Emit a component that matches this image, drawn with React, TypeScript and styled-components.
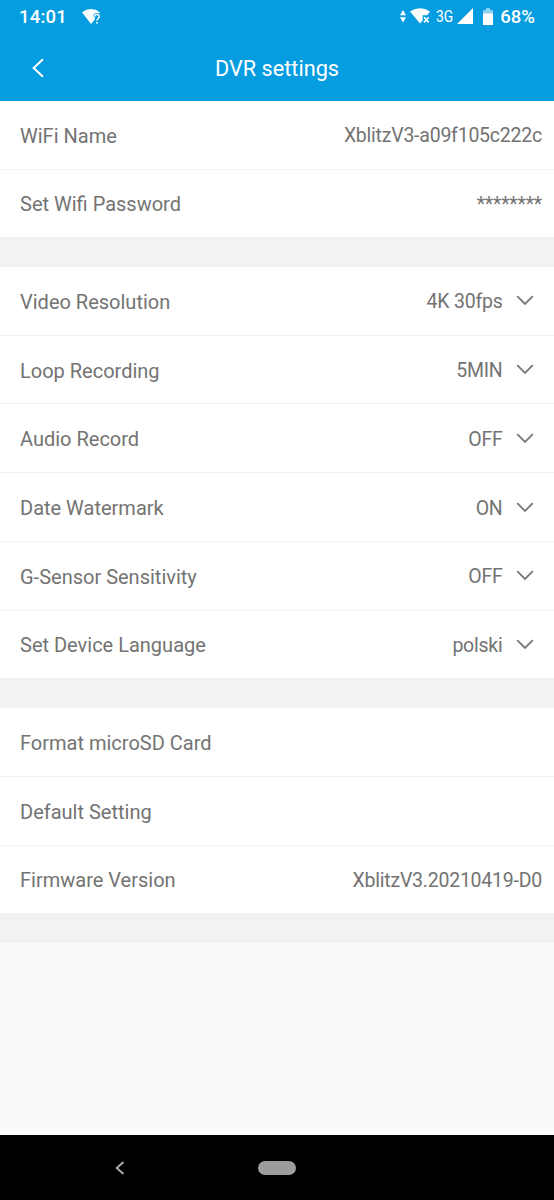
import React from "react";
import styled, { createGlobalStyle } from "styled-components";

const GlobalStyle = createGlobalStyle`
  *, *::before, *::after { box-sizing: border-box; }
  body {
    margin: 0;
    background: #fafafa;
    font-family: Roboto, "Liberation Sans", sans-serif;
  }
`;

const Screen = styled.main`
  display: flex;
  flex-direction: column;
  width: 554px;
  height: 1200px;
  overflow: hidden;
  background: #fafafa;
`;

const Header = styled.header`
  flex: none;
  height: 100.75px;
  background: #069de0;
  color: #fff;
`;

const StatusBar = styled.div`
  display: flex;
  align-items: center;
  height: 34px;
  padding: 0 19px;
`;

const StatusText = styled.span<{ $left?: number; $spacing?: number }>`
  margin-left: ${(p) => p.$left ?? 0}px;
  font-size: 18.5px;
  font-weight: 500;
  letter-spacing: ${(p) => p.$spacing ?? 0}px;
  line-height: 34px;
  white-space: nowrap;
`;

const NetworkType = styled.span`
  width: 17px;
  margin-left: 6px;
  font-size: 16.5px;
  line-height: 32px;
  transform: scaleX(0.84);
  transform-origin: left center;
`;

const StatusIcon = styled.svg<{ $left?: number }>`
  display: block;
  flex: none;
  margin-left: ${(p) => p.$left ?? 0}px;
  overflow: visible;
`;

const StatusRight = styled.div`
  display: flex;
  align-items: center;
  margin-left: auto;
`;

const TitleBar = styled.div`
  display: grid;
  grid-template-columns: 100px 1fr 100px;
  align-items: center;
  height: 66px;
  padding-top: 3px;
`;

const BackButton = styled.button`
  display: block;
  padding: 0 0 0 32px;
  margin-top: -2px;
  border: 0;
  background: none;
  color: inherit;
`;

const Title = styled.h1`
  margin: 0;
  font-size: 21.7px;
  font-weight: 400;
  line-height: 30px;
  text-align: center;
`;

const Group = styled.section`
  flex: none;
  background: #fff;
`;

const Gap = styled.div`
  flex: none;
  height: 30px;
  background: #f2f2f2;
`;

const Row = styled.div`
  display: flex;
  align-items: center;
  justify-content: space-between;
  height: 68.75px;
  padding: 2px 12px 0 20px;
  border-bottom: 1px solid #f2f2f2;
  color: #737373;
  font-size: 20px;

  &:last-child {
    height: 67.4px;
    border-bottom: 0;
  }
`;

const Label = styled.span`
  white-space: nowrap;
`;

const Value = styled.span`
  display: flex;
  align-items: center;
  font-size: 19.5px;
  letter-spacing: -0.23px;
`;

const Chevron = styled.svg`
  display: block;
  margin: -2px 8.5px 0 13px;
`;

const NavBar = styled.nav`
  display: grid;
  grid-template-columns: 1fr 38px 1fr;
  align-items: center;
  height: 65px;
  margin-top: auto;
  background: #000;
`;

const NavBack = styled.svg`
  display: block;
  margin-left: 115px;
`;

const HomePill = styled.div`
  height: 14px;
  border-radius: 7px;
  background: #9d9d9d;
`;

type Item = { label: string; value?: string; select?: boolean };

const network: Item[] = [
  { label: "WiFi Name", value: "XblitzV3-a09f105c222c" },
  { label: "Set Wifi Password", value: "********" },
];

const recording: Item[] = [
  { label: "Video Resolution", value: "4K 30fps", select: true },
  { label: "Loop Recording", value: "5MIN", select: true },
  { label: "Audio Record", value: "OFF", select: true },
  { label: "Date Watermark", value: "ON", select: true },
  { label: "G-Sensor Sensitivity", value: "OFF", select: true },
  { label: "Set Device Language", value: "polski", select: true },
];

const device: Item[] = [
  { label: "Format microSD Card" },
  { label: "Default Setting" },
  { label: "Firmware Version", value: "XblitzV3.20210419-D0" },
];

function SettingsGroup({ items }: { items: Item[] }) {
  return (
    <Group>
      {items.map((item) => (
        <Row key={item.label}>
          <Label>{item.label}</Label>
          {item.value && (
            <Value>
              {item.value}
              {item.select && (
                <Chevron width="18" height="11" viewBox="0 0 18 11">
                  <path d="M1.2 1.2 9 8.9 16.8 1.2" fill="none" stroke="#777" strokeWidth="1.8" />
                </Chevron>
              )}
            </Value>
          )}
        </Row>
      ))}
    </Group>
  );
}

export default function App() {
  return (
    <>
      <GlobalStyle />
      <Screen>
        <Header>
          <StatusBar>
            <StatusText $spacing={0.2}>14:01</StatusText>
            <StatusIcon $left={15} width="19" height="16" viewBox="0 0 19 16">
              <path d="M0 3.2Q9-3.2 18 3.2L17 4.6C14.4 3 11.2 4.6 11.2 7.4H12.8V10.4L9 15Z" fill="#fff" />
              <path d="M12.8 7.6C12.8 4.8 17.3 4.8 17.3 7.5 17.3 9.3 15 9.5 15 11.8M15 13.1V14.8" fill="none" stroke="#fff" strokeWidth="1.4" />
            </StatusIcon>
            <StatusRight>
              <StatusIcon width="6" height="17" viewBox="0 0 6 17">
                <path d="M0 6.2 3 1 6 6.2ZM0 8.2H6L3 13.4Z" fill="#fff" />
              </StatusIcon>
              <StatusIcon $left={4} width="20" height="18" viewBox="0 0 20 18">
                <path d="M0 3.6Q10-3.2 20 3.6L17.2 7.2H12.6V12.4L10 15.5Z" fill="#fff" />
                <path d="m14 9.2 4.6 5.2m0-5.2-4.6 5.2" stroke="#fff" strokeWidth="1.6" />
              </StatusIcon>
              <NetworkType>3G</NetworkType>
              <StatusIcon $left={4} width="16" height="18" viewBox="0 0 16 18">
                <path d="M16 0V16H0Z" fill="#fff" />
              </StatusIcon>
              <StatusIcon $left={10} width="10" height="18" viewBox="0 0 10 18">
                <path d="M3 0H7V2H10V6H0V2H3Z" fill="#8bcff0" />
                <path d="M0 5.5H10V17H0Z" fill="#fff" />
              </StatusIcon>
              <StatusText $left={7}>68%</StatusText>
            </StatusRight>
          </StatusBar>
          <TitleBar>
            <BackButton aria-label="Back">
              <StatusIcon width="12" height="20" viewBox="0 0 12 20">
                <path d="M11 1.2 1.6 10 11 18.8" fill="none" stroke="#fff" strokeWidth="2" />
              </StatusIcon>
            </BackButton>
            <Title>DVR settings</Title>
          </TitleBar>
        </Header>
        <SettingsGroup items={network} />
        <Gap />
        <SettingsGroup items={recording} />
        <Gap />
        <SettingsGroup items={device} />
        <Gap />
        <NavBar>
          <NavBack width="10" height="14" viewBox="0 0 10 14">
            <path d="M8.5 1 1.8 7 8.5 13" fill="none" stroke="#aaa" strokeWidth="2" />
          </NavBack>
          <HomePill />
        </NavBar>
      </Screen>
    </>
  );
}
